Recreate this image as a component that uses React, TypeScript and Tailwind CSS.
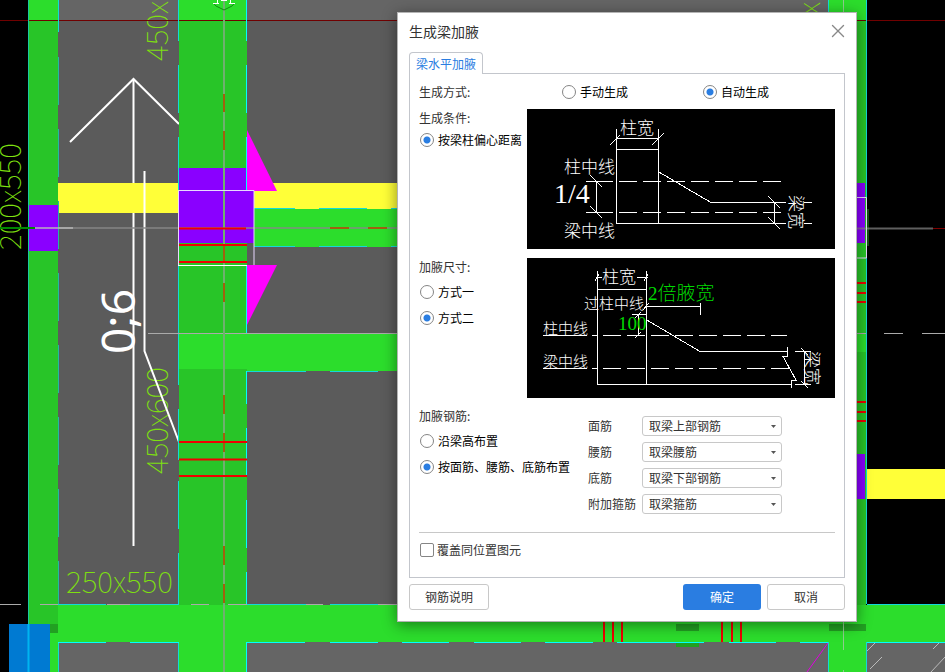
import type { ReactNode } from "react";
import { X } from "lucide-react";

const bars = [
  { label: "面筋", id: "top-bar", value: "取梁上部钢筋" },
  { label: "腰筋", id: "waist-bar", value: "取梁腰筋" },
  { label: "底筋", id: "bottom-bar", value: "取梁下部钢筋" },
  { label: "附加箍筋", id: "stirrup", value: "取梁箍筋" },
];

function Drawing() {
  return (
    <svg
      viewBox="0 0 945 672"
      preserveAspectRatio="xMinYMin slice"
      className="absolute inset-0 h-full w-full"
      aria-hidden="true"
    >
      {/* Slabs */}
      <rect width="945" height="672" fill="#000" />
      <rect x="58" width="770" height="672" fill="#5b5b5b" />
      <rect x="58" width="770" height="20" fill="#656565" />
      <rect x="58" y="642" width="887" height="30" fill="#656565" />

      {/* Member size notes */}
      <g fill="#7fe010" fontFamily="'Noto Sans CJK SC', sans-serif" fontSize="30" fontWeight="100">
        <text x="66" y="593">250x550</text>
        <text transform="translate(168 61) rotate(-90)">450x</text>
        <text transform="translate(168 474) rotate(-90)">450x600</text>
        <text transform="translate(21 250) rotate(-90)">200x550</text>
        <text transform="translate(820 15) rotate(-90)">x</text>
      </g>

      {/* White leader and arrow */}
      <g fill="none" stroke="#fff" strokeWidth="2">
        <path d="M70 142L133.500 79L179 124" />
        <path d="M133.500 79V546" />
      </g>
      <text
        transform="translate(135 354) rotate(-90)"
        fill="#fff"
        fontFamily="'Noto Sans', sans-serif"
        fontSize="46"
      >
        0;6
      </text>

      {/* Yellow beams */}
      <g fill="#ffff38">
        <rect x="58" y="183" width="121" height="30" />
        <rect x="247" y="183" width="160" height="26" />
        <rect x="867" y="469" width="78" height="30" />
      </g>
      <path d="M144.500 171V351L179 442" fill="none" stroke="#fff" strokeWidth="2" />

      {/* Columns */}
      <g fill="#28c528">
        <rect x="28" width="30" height="672" />
        <rect x="179" width="68" height="672" />
        <rect x="828" width="38" height="672" />
      </g>
      <g fill="#2cdd2c">
        <rect x="28" width="30" height="20" />
        <rect x="179" width="68" height="20" />
        <rect x="828" width="38" height="20" />
        <rect x="254" y="209" width="150" height="38" />
        <rect x="179" y="333" width="225" height="36" />
        <rect x="247" y="333" width="157" height="38" />
        <rect x="828" y="333" width="38" height="19" />
        <rect x="58" y="605" width="887" height="37" />
        <rect x="28" y="633" width="30" height="39" />
        <rect x="179" y="605" width="68" height="67" />
        <rect x="828" y="605" width="38" height="67" />
      </g>
      <g fill="#22a022">
        <rect x="50" y="624" width="8" height="9" />
        <rect x="676" y="624" width="23" height="7" />
        <rect x="676" y="643" width="23" height="4" />
        <rect x="829" y="624" width="37" height="7" />
      </g>
      <rect x="867" y="209" width="2" height="37" fill="#145014" />
      <g fill="#8a00ff">
        <rect x="28" y="205" width="30" height="46" />
        <rect x="179" y="168" width="68" height="23" />
        <rect x="179" y="190" width="75" height="53" />
        <rect x="828" y="183" width="37" height="60" />
        <rect x="828" y="454" width="37" height="45" />
      </g>
      <path d="M0 20.500H945" stroke="#700000" />
      <path d="M247 130L277 191H247ZM247 265H277L247 325Z" fill="#ff00ff" />

      {/* Beam edges */}
      <g stroke="#13d9d9" strokeWidth="1" fill="none">
        <path d="M28.500 0V672" stroke="#18c8a0" strokeWidth="1" />
        <path d="M58.500 0V32M58.500 642V672" />
        <path d="M58.500 57V604" stroke="#25b5a5" strokeDasharray="48 24" />
        <path d="M178.500 0V41M178.500 65V113M178.500 137V190M178.500 265V385M178.500 409V460M178.500 481V529M178.500 553V604M178.500 642V672" />
        <path stroke="#00ffff" d="M246.500 0V41M246.500 65V113M246.500 137V190M246.500 265V333M246.500 371V404M246.500 428V477M246.500 500V548M246.500 572V604M246.500 642V672" />
        <path d="M247 333.500H306M330 333.500H378M247 371.500H306M330 371.500H378M254 208.500H295M319 208.500H367M391 208.500H400M254 246.500H295M319 246.500H367M391 246.500H400" />
        <path d="M58 604.500H106M130 604.500H179M247 604.500H306M330 604.500H378M867 604.500H945" />
        <path stroke="#00ffff" d="M58 642.500H106M130 642.500H179M247 642.500H305M330 642.500H378M402 642.500H449M474 642.500H521M545 642.500H593M617 642.500H704M729 642.500H776M800 642.500H828M867 642.500H945" />
        <path d="M866.500 0V604M828.500 0V20M828.500 642V672M866.500 642V672" />
      </g>

      {/* Axes */}
      <g stroke="#888" strokeWidth="1" fill="none">
        <path d="M58 228H397M855 228.500H933" strokeWidth="2" opacity=".7" />
        <path d="M0 228H35" stroke="#008800" strokeWidth="2" />
        <path d="M35 228H73" stroke="#bbb" strokeWidth="2" opacity=".7" />
        <path d="M148 333.500H400M855 333.500H866M884 333.500H903M922 333.500H945" stroke="#aaa" />
        <path d="M0 604.500H21M40 604.500H58M107 604.500H130M191 604.500H209M228 604.500H247M306 604.500H323M378 604.500H397" stroke="#aaa" />
        <path d="M224 0V672" stroke="#70b070" strokeWidth="2" />
        <path d="M843.500 0V12M843.500 621V650M843.500 670V672" stroke="#8ecb8e" />
        <path
          d="M224 94V112M224 131V150M224 246V262M224 283V302M224 395V414M224 433V452M224 546V565M224 584V603M330 228H349M368 228H387"
          stroke="#a06010"
          strokeWidth="2"
        />
        <path d="M933 228.500H945" stroke="#800000" />
      </g>

      {/* Column outline and stirrups */}
      <path d="M178.500 265V190.500H254V265M828 197.500H866.500V258H828" fill="none" stroke="#e8d8ff" />
      <path d="M178 265.500H247" stroke="#fff" />
      <g stroke="#f00000" strokeWidth="2">
        <path d="M179 228.500H246M179 245H247M179 262H247M179 442H247M179 459.500H247M179 476H247" />
        <path d="M850 283H866M850 293H866M850 302H866M850 402H866M850 412H866M850 421H866" />
        <path d="M604 621V642M613 621V642M622 621V642M722 621V642M732 621V642M741 621V642" />
      </g>
      <path d="M807 672L828 643" stroke="#e000e0" />
      <path
        d="M867 651L875 643M870 669L882 657M933 649L939 643M931 672L945 657"
        stroke="#bbb"
      />

      {/* Axis bubble */}
      <path d="M213 3L216 6L224 10L232 6L235 3" fill="none" stroke="#128a12" />
      <path d="M217.500 0V4M213 3.500H219M230.500 0V4M229 3.500H235M221 0.500H227" fill="none" stroke="#fff" strokeWidth="1" />

      <rect x="9" y="624" width="41" height="48" fill="#007ad2" />
      <path d="M28.500 624V672" stroke="#00b4f0" strokeWidth="2" />
    </svg>
  );
}

function OffsetDiagram() {
  return (
    <svg viewBox="0 0 308 140" className="h-[140px] w-full bg-black" aria-label="柱宽 梁宽">
      <g fill="none" stroke="#fff" shapeRendering="crispEdges">
        <path d="M89.500 20V114.500M131.500 20V114.500M89 29.500H131M89 40.500H131" />
        <path d="M83 36L93 26M125 36L137 24" />
        <path d="M89 114.500H259M277 114.500H285M277 93.500H285" />
        <path d="M131 62.500L184 93.500H259" />
        <path d="M59 72.500H86M59 103.500H86M69.500 72V103" />
        <path d="M92 72.500H254M92 103.500H254" strokeDasharray="18 6" />
        <path d="M63 66L75 78M63 97L75 109M241 87L253 99M241 108L253 120M247.500 93V114" />
      </g>
      <g fill="#fff" fontFamily="'Noto Sans CJK SC', sans-serif" fontSize="17" fontWeight="300">
        <text x="93" y="25">柱宽</text>
        <text x="37" y="64">柱中线</text>
        <text x="37" y="128">梁中线</text>
        <text transform="translate(263 86) rotate(90)" fontSize="17">梁宽</text>
      </g>
      <text x="27" y="94" fill="#fff" fontFamily="'Liberation Serif', serif" fontSize="28">1/4</text>
    </svg>
  );
}

function SizeDiagram() {
  return (
    <svg viewBox="0 0 308 140" className="h-[140px] w-full bg-black" aria-label="2倍腋宽">
      <g fill="none" stroke="#fff" shapeRendering="crispEdges">
        <path d="M70.500 13V126.500M119.500 13V126.500M70 31.500H119M70 126.500H265" />
        <path d="M69 19.500H75M110 19.500H121M68 23L72 16M117 23L121 16" />
        <path d="M119 48.500H174M173.500 45V57M116 52L122 45" />
        <path d="M105 56.500H120M111.500 56V77M108 60L114 54M108 80L114 74" />
        <path d="M119 61.500L173 93.500H261M260.500 89V98.500H256L269 122H264.500V130" />
        <path d="M16 77.500H60M65 77.500H70M16 110.500H60M65 110.500H70" />
        <path d="M76 77.500H260M76 110.500H265" strokeDasharray="18 6" />
        <path d="M268 93.500H284M268 126.500H284M277.500 93V126M274 90L281 97M274 123L281 130" />
      </g>
      <g fill="#fff" fontFamily="'Noto Sans CJK SC', sans-serif" fontSize="15" fontWeight="300">
        <text x="75" y="25" fontSize="17">柱宽</text>
        <text x="57" y="51">过柱中线</text>
        <text x="16" y="76">柱中线</text>
        <text x="16" y="109">梁中线</text>
        <text transform="translate(279 93) rotate(90)" fontSize="17">梁宽</text>
      </g>
      <g fill="#00d800" fontFamily="'Liberation Serif', 'Noto Sans CJK SC', serif" fontSize="19" fontWeight="300">
        <text x="121" y="42">2倍腋宽</text>
        <text x="91" y="72">100</text>
      </g>
    </svg>
  );
}

function Radio({ name, checked, children }: { name: string; checked?: boolean; children: ReactNode }) {
  return (
    <label className="flex h-[26px] items-center gap-1 whitespace-nowrap pl-px text-black">
      <input
        type="radio"
        name={name}
        defaultChecked={checked}
        className="size-[14px] shrink-0 appearance-none rounded-full border border-[#858585] bg-white checked:bg-[radial-gradient(circle,#2a7de1_0_3px,transparent_4px)]"
      />
      {children}
    </label>
  );
}

export default function App() {
  return (
    <main className="relative min-h-screen overflow-hidden bg-black font-['Noto_Sans_CJK_SC',sans-serif] text-xs text-[#333]">
      <Drawing />

      <section
        role="dialog"
        aria-labelledby="dialog-title"
        className="absolute left-[397px] top-3 w-[460px] border border-[#b4b4b4] bg-white px-[11px] pb-[11px] shadow-[0_3px_14px_rgba(0,0,0,0.45)]"
      >
        <header className="flex h-[39px] items-center justify-between pb-[3px]">
          <h1 id="dialog-title" className="text-sm">生成梁加腋</h1>
          <button type="button" aria-label="关闭" className="-mr-1 text-[#888]">
            <X className="size-[22px]" strokeWidth={1.500} />
          </button>
        </header>

        <div role="tablist" className="flex">
          <button
            type="button"
            role="tab"
            aria-selected="true"
            className="relative z-10 -mb-px h-[22px] w-[74px] rounded-t border border-b-0 border-[#c3c6cc] bg-white text-[#2a7de1]"
          >
            梁水平加腋
          </button>
        </div>

        <div className="border border-[#c3c6cc] px-[9px] pb-[13px]">
          <div className="flex h-[35px] items-center">
            <span className="w-[142px]">生成方式:</span>
            <div className="w-[141px]">
              <Radio name="mode">手动生成</Radio>
            </div>
            <Radio name="mode" checked>自动生成</Radio>
          </div>

          <div className="grid grid-cols-[108px_1fr] gap-y-[9px]">
            <div>
              <p className="h-[18px] leading-[18px]">生成条件:</p>
              <Radio name="condition" checked>按梁柱偏心距离</Radio>
            </div>
            <OffsetDiagram />
            <div>
              <p className="mb-[3px] h-[18px] leading-[18px]">加腋尺寸:</p>
              <Radio name="size">方式一</Radio>
              <Radio name="size" checked>方式二</Radio>
            </div>
            <SizeDiagram />
          </div>

          <div className="mt-[9px] flex border-b border-[#c8c8c8] pb-[15px]">
            <div className="w-[169px]">
              <p className="mb-[3px] h-[18px] leading-[18px]">加腋钢筋:</p>
              <Radio name="rebar">沿梁高布置</Radio>
              <Radio name="rebar" checked>按面筋、腰筋、底筋布置</Radio>
            </div>
            <div className="pt-[6px]">
              {bars.map((bar) => (
                <div key={bar.id} className="flex h-[26px] items-center">
                  <label htmlFor={bar.id} className="w-[54px]">{bar.label}</label>
                  <div className="relative">
                    <select
                      id={bar.id}
                      className="block h-[20px] w-[140px] appearance-none rounded-[3px] border border-[#c8c8c8] bg-white pl-[6px] leading-[18px]"
                    >
                      <option>{bar.value}</option>
                    </select>
                    <svg viewBox="0 0 5 3" className="pointer-events-none absolute right-[6px] top-[9px] h-[3px] w-[5px]" aria-hidden="true">
                      <path d="M0 0H5L2.500 3Z" fill="#555" />
                    </svg>
                  </div>
                </div>
              ))}
            </div>
          </div>

          <label className="mt-[3px] flex h-[28px] items-center gap-[3px] pl-px">
            <input type="checkbox" className="size-[14px] appearance-none rounded-[2px] border border-[#858585] bg-white checked:bg-[#2a7de1]" />
            覆盖同位置图元
          </label>
        </div>

        <footer className="mt-[6px] flex gap-[6px]">
          <button type="button" className="mr-auto h-[26px] w-[80px] rounded-[3px] border border-[#c8c8c8]">钢筋说明</button>
          <button type="button" className="h-[26px] w-[78px] rounded-[3px] bg-[#2a7de1] text-white">确定</button>
          <button type="button" className="h-[26px] w-[78px] rounded-[3px] border border-[#c8c8c8]">取消</button>
        </footer>
      </section>
    </main>
  );
}
